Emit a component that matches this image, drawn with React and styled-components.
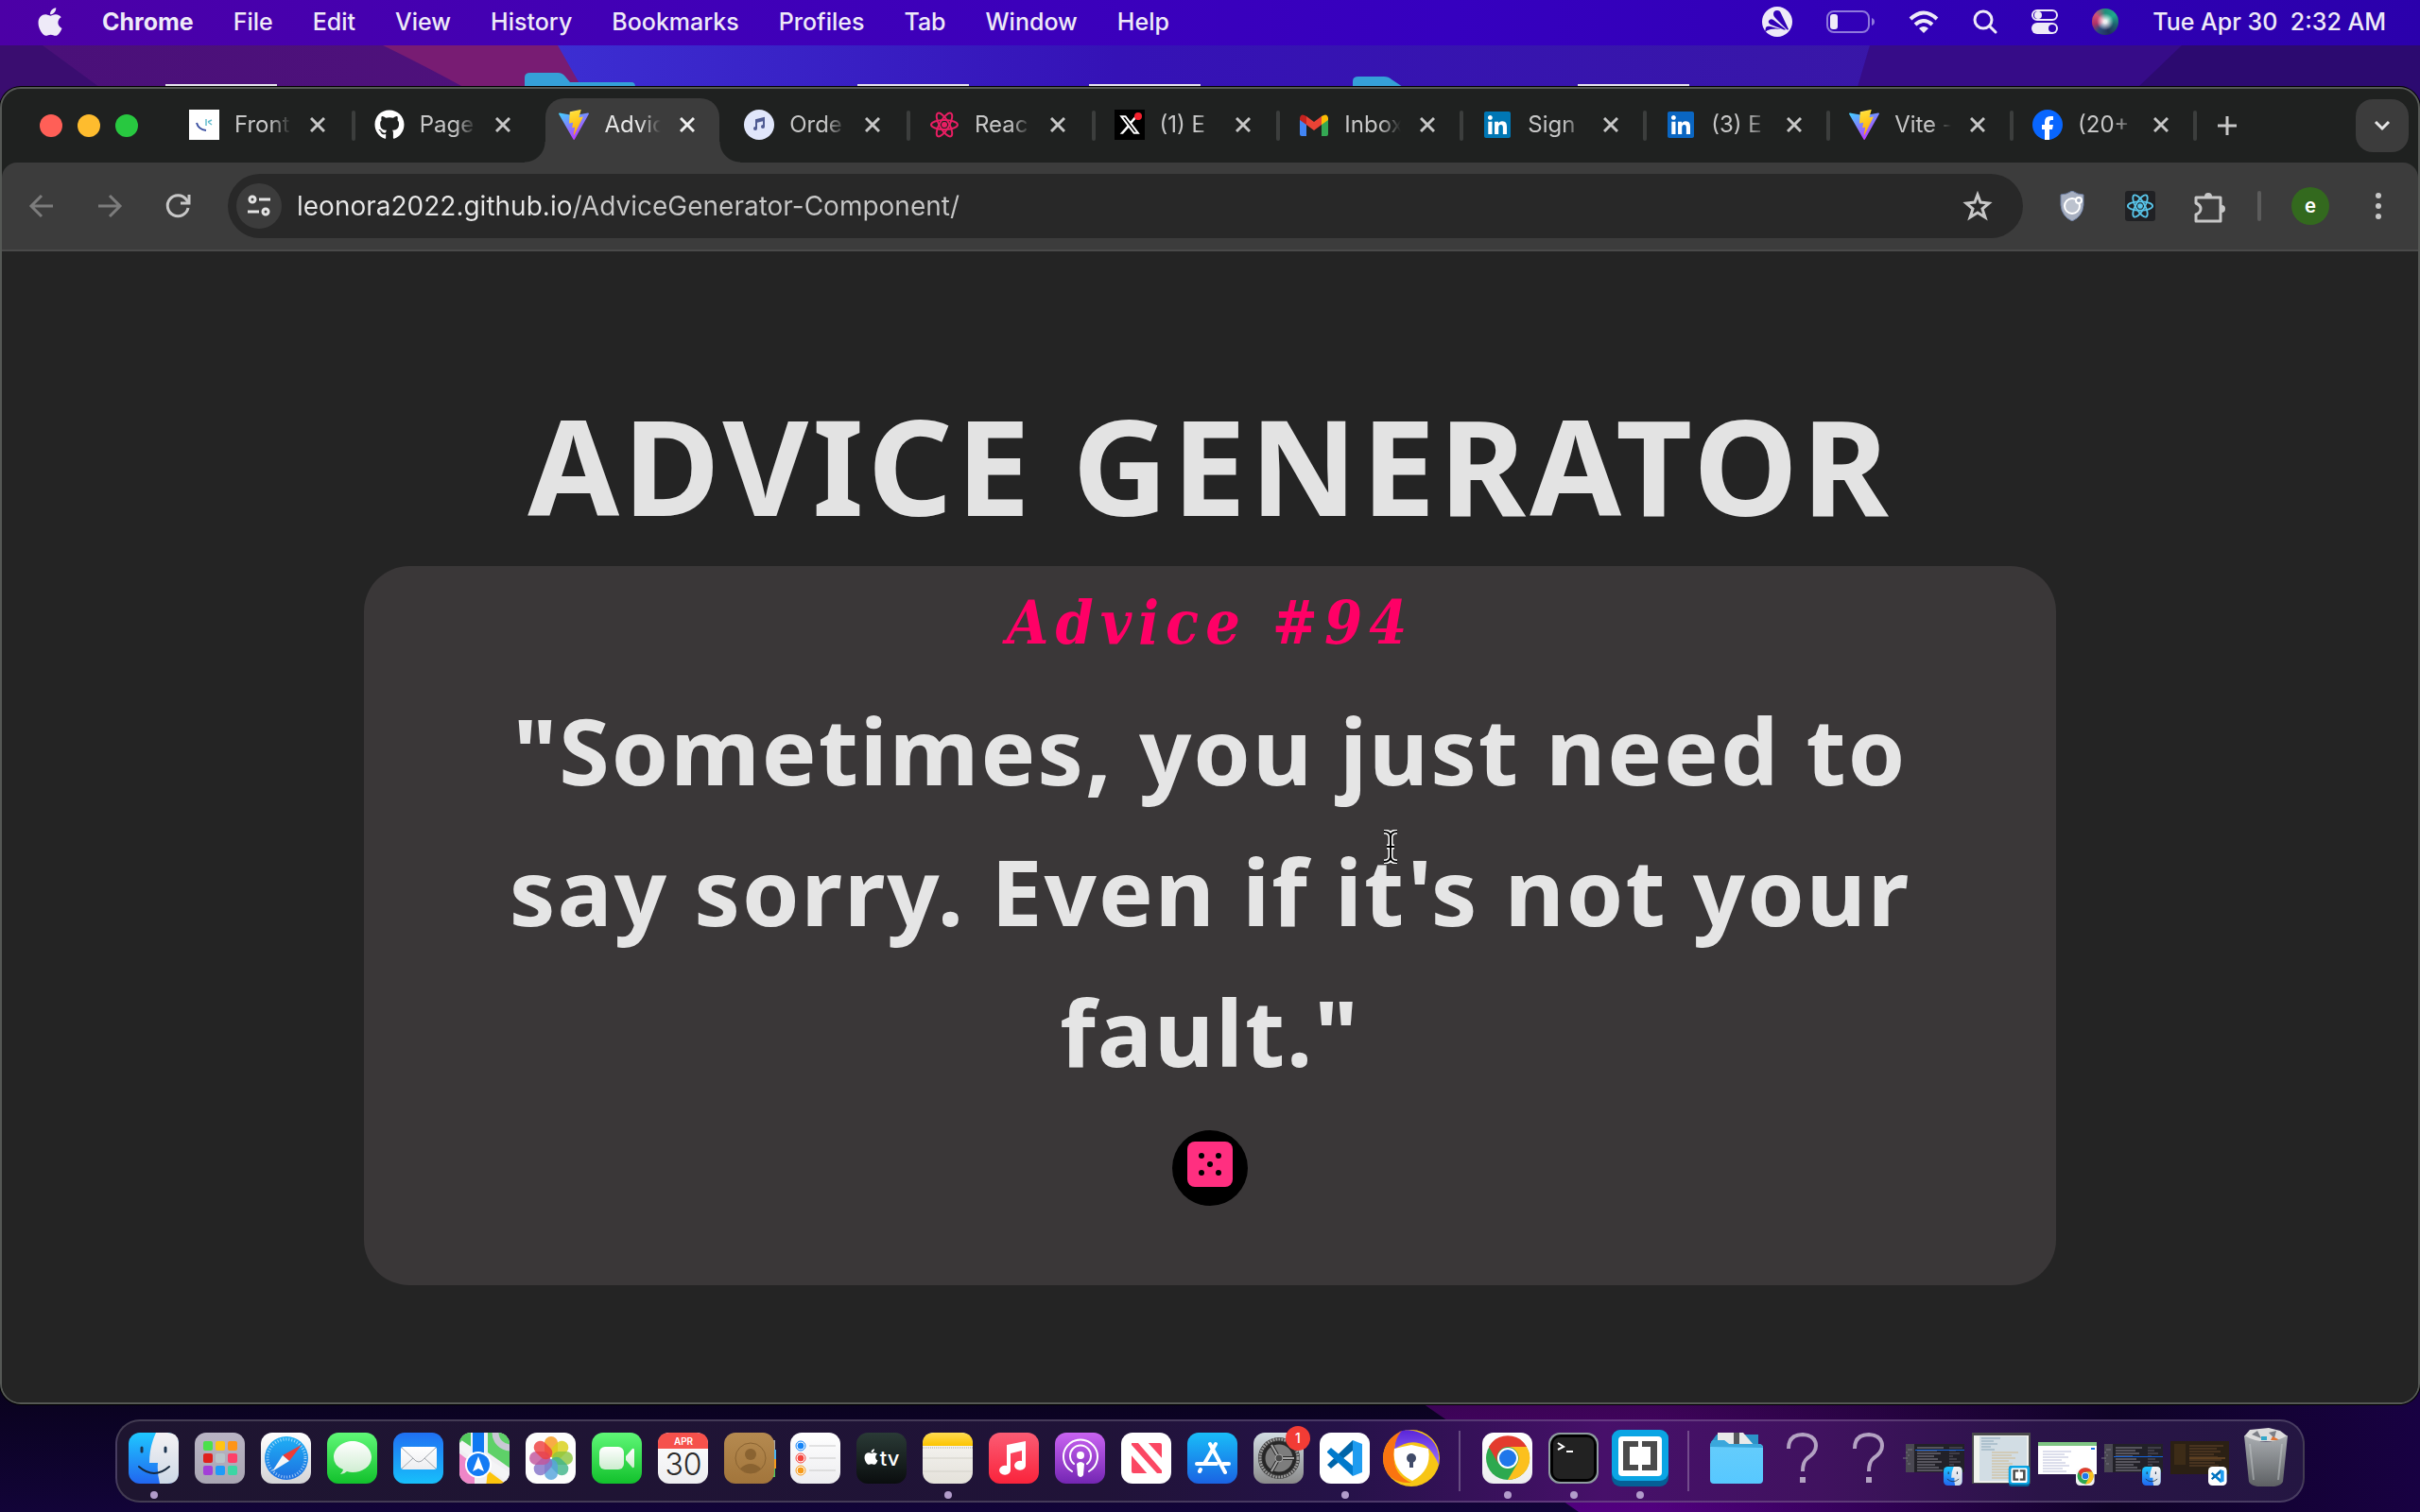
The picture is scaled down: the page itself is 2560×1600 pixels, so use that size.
import React from "react";
import styled, { createGlobalStyle, css } from "styled-components";
import { FaApple, FaGithub, FaLinkedin } from "react-icons/fa";
import { FaXTwitter } from "react-icons/fa6";

const GlobalStyle = createGlobalStyle`
  *, *::before, *::after { box-sizing: border-box; }
  body { margin: 0; background: #07031a; font-family: Inter, "Liberation Sans", sans-serif; }
  button, input { font: inherit; color: inherit; border: 0; padding: 0; background: none; }
  h1, h2, p { margin: 0; }
  svg { display: block; }
`;

/* ---------- shared paint ---------- */

const gradients = {
  finderBlue: ["#1fc8ff", "#2166f0"],
  finderFace: ["#f4f2f4", "#cdd9e6"],
  launchpad: ["#b9b4c4", "#a9a6b3"],
  steel: ["#ffffff", "#d4d4d6"],
  safari: ["#1fb0f5", "#1d6fe0"],
  green: ["#5ff777", "#12c12c"],
  mail: ["#2070f3", "#17c0fb"],
  contacts: ["#b58a50", "#a2753b"],
  tv: ["#2a3a36", "#0a0d0e"],
  paper: ["#f8f7f4", "#e4e1da"],
  notesTop: ["#ffdc52", "#fcc400"],
  music: ["#fb5c74", "#fa233b"],
  podcasts: ["#c963f1", "#7426b3"],
  appStore: ["#19bdf8", "#1a63e3"],
  settings: ["#d2dde3", "#8a8a8a"],
  white: ["#ffffff", "#ededf0"],
  bubble: ["#ffffff", "#cdeccf"],
  folder: ["#66cdfb", "#57c8ff"],
  trash: ["#a9adb1", "#5d6063"],
  avastPurple: ["#5a25d8", "#9a72ff"],
};

const PaintDefs = styled.svg`
  position: absolute;
  width: 0;
  height: 0;
`;

const Paints = () => (
  <PaintDefs aria-hidden="true">
    <defs>
      {Object.entries(gradients).map(([id, [from, to]]) => (
        <linearGradient key={id} id={id} x1="0" y1="0" x2="0" y2="1">
          <stop offset="0" stopColor={from} />
          <stop offset="1" stopColor={to} />
        </linearGradient>
      ))}
      <linearGradient id="viteBody" x1="0" y1="0" x2=".6" y2="1">
        <stop offset="0" stopColor="#41d1ff" />
        <stop offset="1" stopColor="#bd34fe" />
      </linearGradient>
      <linearGradient id="viteBolt" x1=".4" y1="0" x2=".6" y2="1">
        <stop offset="0" stopColor="#ffea83" />
        <stop offset=".1" stopColor="#ffdd35" />
        <stop offset="1" stopColor="#ffa800" />
      </linearGradient>
    </defs>
  </PaintDefs>
);

/* ---------- desktop ---------- */

const Desktop = styled.div`
  position: relative;
  isolation: isolate;
  display: flex;
  flex-direction: column;
  min-height: 100vh;
`;

const WallpaperLayer = styled.svg`
  position: absolute;
  inset: 0;
  width: 100%;
  height: 100%;
  z-index: -1;
`;

const Wallpaper = () => (
  <WallpaperLayer viewBox="0 0 2560 1600" preserveAspectRatio="none" aria-hidden="true">
    <defs>
      <linearGradient id="wpBlue"><stop offset="0" stopColor="#3c2ed2" /><stop offset=".3" stopColor="#3512b6" /><stop offset="1" stopColor="#3b1a9d" /></linearGradient>
      <linearGradient id="wpPurple"><stop offset="0" stopColor="#4a1079" /><stop offset="1" stopColor="#611786" /></linearGradient>
      <linearGradient id="wpDark" x1="0" y1="0" x2="0" y2="1"><stop offset="0" stopColor="#05020f" /><stop offset="1" stopColor="#120438" /></linearGradient>
      <linearGradient id="wpViolet" x1="0" y1="0" x2="0" y2="1"><stop offset="0" stopColor="#2d0639" /><stop offset="1" stopColor="#520080" /></linearGradient>
      <linearGradient id="wpFade"><stop offset="0" stopColor="#10022c" stopOpacity="0" /><stop offset=".6" stopColor="#0f0327" /><stop offset="1" stopColor="#180142" /></linearGradient>
    </defs>
    <path d="M0 48H2560V800H0Z" fill="#3a0d70" />
    <path d="M45 48L105 92L200 160H2560V48Z" fill="url(#wpPurple)" />
    <path d="M405 48Q450 70 490 92L600 160H2560V48Z" fill="#781c73" />
    <path d="M590 48L615 92L640 160H2560V48Z" fill="url(#wpBlue)" />
    <path d="M1978 48L1965 92L1950 160H2560V48Z" fill="#360c88" />
    <path d="M2308 48L2262 92L2200 160H2560V48Z" fill="#2c0a70" />
    <path d="M0 1400H2560V1600H0Z" fill="url(#wpDark)" />
    <path d="M1400 1412L1670 1600H2560V1412Z" fill="url(#wpViolet)" />
    <path d="M1750 1412H2560V1600H1750Z" fill="url(#wpFade)" />
    <path d="M555 92V82Q555 77 561 77H590Q595 77 598 81L603 87H668Q672 87 672 92Z" fill="#35a0d8" />
    <path d="M1431 92V86Q1431 81 1437 81H1464Q1469 81 1472 84L1484 92Z" fill="#35a0d8" />
    <path d="M175 89h118v2h-118zM907 89h118v2h-118zM1152 89h118v2h-118zM1669 89h118v2h-118z" fill="#e6e3ee" />
  </WallpaperLayer>
);

/* ---------- menu bar ---------- */

const MenuBar = styled.header`
  display: flex;
  justify-content: space-between;
  height: 48px;
  padding: 0 36px 2px 40px;
  background: linear-gradient(90deg, #4c00a6, #4000b8 30%, #3600bf 60%, #2b00ac);
  color: #eeeaf8;
  font-size: 25px;
  line-height: 32px;
`;

const MenuGroup = styled.nav`
  display: flex;
  align-items: center;
  gap: ${(p) => p.$gap}px;
  white-space: pre;
`;

const MenuItem = styled.button`
  font-weight: ${(p) => (p.$strong ? 700 : 500)};
`;

const AppleMenu = styled(FaApple)`
  width: 26px;
  height: 34px;
`;

const Siri = styled.span`
  width: 28px;
  height: 28px;
  border-radius: 50%;
  background:
    radial-gradient(circle, #ffffffe6 0 8%, transparent 45%),
    conic-gradient(#1f8f7c, #1fa88c 15%, #1c5f6f 30%, #20305a 45%, #2a4a7a 60%, #b03068 72%, #d05078 85%, #1f8f7c);
`;

const AvastGlyph = () => (
  <svg width="32" height="32" viewBox="0 0 32 32" fill="#3100b6">
    <circle cx="16" cy="16" r="16" fill="#eeeaf8" />
    <path d="M12 8Q12 4 16 4Q19 4 20 7L28 24Q27 25 26 24L14 12Q12 10 12 8Z" />
    <path d="M7 15Q9 12 12 14L25 24Q24 25 22 24L9 19Q6 17 7 15Z" />
    <path d="M4 22Q6 20 9 21L20 24Q14 23 9 24Q5 25 3 27Z" />
  </svg>
);
const BatteryGlyph = () => (
  <svg width="51" height="24" viewBox="0 0 51 24" fill="none">
    <rect x="1" y="1" width="44" height="22" rx="7" stroke="#8f78dc" strokeWidth="2" />
    <rect x="4" y="4" width="8" height="16" rx="3" fill="#eeeaf8" />
    <path d="M48 8Q51 9 51 12Q51 15 48 16Z" fill="#8f78dc" />
  </svg>
);
const WifiGlyph = () => (
  <svg width="32" height="24" viewBox="0 0 32 24" fill="none" stroke="#eeeaf8" strokeWidth="4">
    <path d="M2 9Q16-4 30 9" />
    <path d="M7 15Q16 7 25 15" />
    <path d="M16 24L11 19Q16 15 21 19Z" fill="#eeeaf8" stroke="none" />
  </svg>
);
const SearchGlyph = () => (
  <svg width="26" height="26" viewBox="0 0 26 26" fill="none" stroke="#eeeaf8" strokeWidth="3" strokeLinecap="round">
    <circle cx="11" cy="11" r="9" />
    <path d="M18 18L24 24" />
  </svg>
);
const ControlGlyph = () => (
  <svg width="28" height="26" viewBox="0 0 28 26">
    <rect x="1" y="1" width="26" height="10" rx="5" fill="none" stroke="#eeeaf8" strokeWidth="2" />
    <circle cx="7" cy="6" r="4" fill="#eeeaf8" />
    <rect x="0" y="14" width="28" height="12" rx="6" fill="#eeeaf8" />
    <circle cx="22" cy="20" r="4" fill="#3000b4" />
  </svg>
);

/* ---------- browser window ---------- */

const Window = styled.section`
  flex: 1;
  display: flex;
  flex-direction: column;
  margin-top: 44px;
  border: 2px solid #555855;
  border-radius: 22px;
  overflow: hidden;
  background: #1f2120;
  box-shadow: 0 0 0 1px #000;
`;

const TabStrip = styled.div`
  display: flex;
  align-items: center;
  height: 78px;
  padding: 0 10px 0 40px;
`;

const Lights = styled.div`
  display: flex;
  gap: 16px;
  width: 138px;
`;

const Light = styled.button`
  width: 24px;
  height: 24px;
  border-radius: 50%;
  background: ${(p) => p.$color};
`;

const TabList = styled.div`
  flex: 1;
  display: flex;
  align-self: stretch;
  min-width: 0;
`;

const Tab = styled.div`
  position: relative;
  isolation: isolate;
  flex: 194 1 0;
  min-width: 0;
  display: flex;
  align-items: center;
  padding: 0 0 2px 20px;
  color: ${(p) => (p.$active ? "#e6e6e6" : "#c7c7c7")};

  &:nth-child(-n + 6) {
    flex-grow: 196;
  }

  &::before {
    content: "";
    position: absolute;
    z-index: -1;
    ${(p) =>
      p.$active
        ? css`
            inset: 10px 6px 0;
            border-radius: 20px 20px 0 0;
            background: #3c3c3c;
          `
        : css`
            top: 23px;
            right: 0;
            width: 4px;
            height: 32px;
            border-radius: 2px;
            background: ${p.$divider ? "#3c3e3d" : "transparent"};
          `}
  }

  &::after {
    content: "";
    display: ${(p) => (p.$active ? "block" : "none")};
    position: absolute;
    z-index: -1;
    bottom: 0;
    left: -16px;
    right: -16px;
    height: 22px;
    background:
      radial-gradient(circle at 0 0, transparent 21px, #3c3c3c 22px) left / 22px 22px no-repeat,
      radial-gradient(circle at 100% 0, transparent 21px, #3c3c3c 22px) right / 22px 22px no-repeat;
  }
`;

const Favicon = styled.span`
  flex: none;
  display: grid;
  place-items: center;
  width: 32px;
  height: 32px;
  margin-right: 16px;
`;

const TabTitle = styled.span`
  flex: none;
  width: 70px;
  white-space: pre;
  font-size: 24px;
  line-height: 32px;
  mask-image: linear-gradient(90deg, #000 38px, transparent 60px);
`;

const CloseTab = styled.button`
  margin-left: 10px;
  color: ${(p) => (p.$active ? "#f0f0f0" : "#c7c7c7")};
`;

const NewTab = styled.button`
  display: grid;
  place-items: center;
  width: 64px;
  height: 56px;
  margin-right: 104px;
`;

const TabSearch = styled.button`
  display: grid;
  place-items: center;
  width: 56px;
  height: 56px;
  border-radius: 18px;
  background: #3c3c3c;
`;

const Toolbar = styled.div`
  display: flex;
  align-items: center;
  height: 94px;
  padding: 0 38px 0 26px;
  border-bottom: 2px solid #4a4a4a;
  border-radius: 16px 16px 0 0;
  background: #3c3c3c;
`;

const NavButtons = styled.div`
  display: flex;
  gap: 40px;
  width: 213px;
`;

const AddressBar = styled.form`
  flex: 1;
  display: flex;
  align-items: center;
  height: 68px;
  padding: 0 32px 0 9px;
  border-radius: 34px;
  background: #282828;
`;

const SiteInfo = styled.button`
  display: grid;
  place-items: center;
  width: 48px;
  height: 48px;
  margin-right: 16px;
  border-radius: 50%;
  background: #3c3c3c;
`;

const Address = styled.input`
  flex: 1;
  min-width: 0;
  height: 40px;
  outline: 0;
  font-size: 28px;
  background: linear-gradient(90deg, #e8e8e8 291px, #c7c7c7 291px);
  background-clip: text;
  color: transparent;
`;

const Extensions = styled.div`
  display: flex;
  align-items: center;
  margin-left: 36px;
`;

const Extension = styled.button`
  display: grid;
  place-items: center;
  width: 32px;
  height: 32px;
  margin-right: 40px;
  border-radius: 3px;
  background: ${(p) => p.$fill || "none"};
`;

const ToolbarRule = styled.span`
  width: 4px;
  height: 32px;
  margin: 0 32px 0 -4px;
  border-radius: 2px;
  background: #5c5c5c;
`;

const Avatar = styled.button`
  width: 40px;
  height: 40px;
  margin-right: 48px;
  border-radius: 50%;
  background: #33691e;
  color: #fff;
  font: 500 22px/36px Roboto, sans-serif;
`;

const Stroke = styled.svg.attrs({ fill: "none", stroke: "currentColor" })`
  width: ${(p) => p.$size}px;
  height: ${(p) => p.$size}px;
  color: ${(p) => p.$tone || "inherit"};
  stroke-width: ${(p) => p.$weight || 3};
`;

const ViteLogo = ({ size = 32 }) => (
  <svg width={size} height={size} viewBox="0 0 256 257">
    <path fill="url(#viteBody)" d="M255.153 37.938L134.897 252.976c-2.483 4.44-8.862 4.466-11.382.048L.875 37.958c-2.746-4.814 1.371-10.646 6.827-9.67l120.385 21.517a6.537 6.537 0 0 0 2.322-.004l117.867-21.483c5.438-.991 9.574 4.796 6.877 9.62Z" />
    <path fill="url(#viteBolt)" d="M185.432.063L96.44 17.501a3.268 3.268 0 0 0-2.634 3.014l-5.474 92.456a3.268 3.268 0 0 0 3.997 3.378l24.777-5.718c2.318-.535 4.413 1.507 3.936 3.838l-7.361 36.047c-.495 2.426 1.782 4.5 4.151 3.78l15.304-4.649c2.372-.72 4.652 1.36 4.15 3.788l-11.698 56.621c-.732 3.542 3.979 5.473 5.943 2.437l1.313-2.028l72.516-144.72c1.215-2.423-.88-5.186-3.54-4.672l-25.505 4.922c-2.396.462-4.435-1.77-3.759-4.114l16.646-57.705c.677-2.35-1.37-4.583-3.769-4.113Z" />
  </svg>
);

const FrontLogo = () => (
  <svg width="32" height="32" viewBox="0 0 32 32">
    <path fill="#fff" d="M0 0h32v32H0z" />
    <path d="M8 14Q10 21 18 22" stroke="#3f54a3" strokeWidth="2" fill="none" />
    <path d="M18 10V17M20 13L24 11M20 13L24 16" stroke="#67bece" strokeWidth="1.500" fill="none" />
  </svg>
);

const MusicLogo = () => (
  <svg width="32" height="32" viewBox="0 0 32 32">
    <circle cx="16" cy="16" r="16" fill="#e0e6fb" />
    <path d="M13 20V11L21 9V18" stroke="#4f5b93" strokeWidth="2" fill="none" />
    <path d="M13 11L21 9V12L13 14Z" fill="#4f5b93" />
    <circle cx="12" cy="20" r="2" fill="#4f5b93" />
    <circle cx="20" cy="18" r="2" fill="#4f5b93" />
  </svg>
);

const ReactOutline = ({ color, size }) => (
  <svg width={size} height={size} viewBox="0 0 32 32" fill="none" stroke={color} strokeWidth="2">
    <ellipse cx="16" cy="16" rx="14" ry="5" />
    <ellipse cx="16" cy="16" rx="14" ry="5" transform="rotate(60 16 16)" />
    <ellipse cx="16" cy="16" rx="14" ry="5" transform="rotate(120 16 16)" />
    <circle cx="16" cy="16" r="3" fill={color} stroke="none" />
  </svg>
);

const XLogo = () => (
  <svg width="32" height="32" viewBox="0 0 32 32">
    <path fill="#000" d="M0 0h32v32H0z" />
    <g transform="translate(4 4)"><FaXTwitter size={24} color="#fff" /></g>
    <circle cx="25" cy="7" r="4" fill="#f4212e" />
  </svg>
);

const GmailLogo = () => (
  <svg width="30" height="23" viewBox="0 0 30 23">
    <path d="M0 5V21Q0 23 2 23H7V10Z" fill="#4285f4" />
    <path d="M23 10V23H28Q30 23 30 21V5Z" fill="#34a853" />
    <path d="M7 2L15 8L23 2V11L15 17L7 11Z" fill="#ea4335" />
    <path d="M0 4Q1-2 7 2V11L0 6Z" fill="#c5221f" />
    <path d="M30 4Q29-2 23 2V11L30 6Z" fill="#fbbc04" />
  </svg>
);

const FacebookLogo = () => (
  <svg width="32" height="32" viewBox="0 0 32 32">
    <circle cx="16" cy="16" r="16" fill="#0866ff" />
    <path d="M13 32V21H10V16H13V13Q13 7 19 7Q21 7 22 7V11H20Q18 11 18 14V16H22L21 21H18V32Z" fill="#fff" />
  </svg>
);

const LinkedinLogo = ({ color }) => (
  <svg width="32" height="32" viewBox="0 0 32 32">
    <rect x="5" y="5" width="22" height="22" fill="#fff" />
    <FaLinkedin size={32} color={color} />
  </svg>
);

const tabs = [
  { title: "Front", icon: <FrontLogo />, divider: true },
  { title: "Page", icon: <FaGithub size={32} color="#fff" /> },
  { title: "Advic", icon: <ViteLogo />, active: true },
  { title: "Orde", icon: <MusicLogo />, divider: true },
  { title: "Reac", icon: <ReactOutline size={32} color="#e91e63" />, divider: true },
  { title: "(1) E", icon: <XLogo />, divider: true },
  { title: "Inbox", icon: <GmailLogo />, divider: true },
  { title: "Sign", icon: <LinkedinLogo color="#0077b5" />, divider: true },
  { title: "(3) E", icon: <LinkedinLogo color="#0a66c2" />, divider: true },
  { title: "Vite -", icon: <ViteLogo />, divider: true },
  { title: "(20+", icon: <FacebookLogo />, divider: true },
];

/* ---------- page ---------- */

const Page = styled.main`
  position: relative;
  flex: 1;
  display: flex;
  flex-direction: column;
  align-items: center;
  padding: 152px 0 120px;
  background: #242424;
`;

const Title = styled.h1`
  margin-bottom: 34px;
  color: #e3e3e3;
  font: 700 140px/147px "Noto Sans", sans-serif;
  letter-spacing: 4px;
`;

const Card = styled.article`
  display: flex;
  flex-direction: column;
  align-items: center;
  width: 70%;
  padding: 20px 128px 84px;
  border-radius: 48px;
  background: #3a3738;
`;

const CardTitle = styled.h2`
  color: #ff0066;
  font: italic 700 64px/80px "DejaVu Serif Condensed", "DejaVu Serif", serif;
  letter-spacing: 7px;
`;

const Quote = styled.p`
  margin-top: 20px;
  color: #e5e5e5;
  text-align: center;
  font: 700 97px/149px "Noto Sans", sans-serif;
  letter-spacing: 2px;
`;

const DiceButton = styled.button`
  display: grid;
  place-items: start center;
  width: 80px;
  height: 80px;
  margin-top: 30px;
  padding-top: 12px;
  border-radius: 50%;
  background: #000;
`;

const TextCursor = styled.svg`
  position: absolute;
  left: 1459px;
  top: 612px;
`;

/* ---------- dock ---------- */

const DockArea = styled.footer`
  display: flex;
  justify-content: center;
  padding: 16px 0 10px;
`;

const DockBar = styled.nav`
  display: flex;
  height: 88px;
  padding: 0 4px;
  border: 2px solid #ffffff2b;
  border-radius: 26px;
  background: linear-gradient(90deg, #1e1530, #201338 45%, #251248 56%, #47106a 68%, #40125f 78%, #2a1448 88%, #241642);
`;

const DockItem = styled.button`
  display: flex;
  flex-direction: column;
  align-items: center;
  gap: 8px;
  width: 70px;
  padding-top: 12px;

  &::after {
    content: "";
    width: 8px;
    height: 8px;
    border-radius: 50%;
    background: ${(p) => (p.$running ? "#b29ccb" : "transparent")};
  }
`;

const DockRule = styled.span`
  width: 2px;
  height: 64px;
  margin: 10px 15px;
  background: #ffffff40;
`;

const AppIcon = styled.svg.attrs({ viewBox: "0 0 54 54", "aria-hidden": true })`
  width: 54px;
  height: 54px;
  overflow: visible;
`;

const Tile = ({ fill }) => <rect x="0" width="53" height="54" rx="12" fill={fill} />;

const FinderArt = () => (
  <>
    <Tile fill="url(#finderBlue)" />
    <path d="M29 0H41Q53 0 53 12V42Q53 54 41 54H33Q30 42 31 32H22Q22 15 29 0Z" fill="url(#finderFace)" />
    <path d="M14 16V20M39 16V20" stroke="#1c3550" strokeWidth="3" strokeLinecap="round" />
    <path d="M11 36Q27 50 43 36" stroke="#16283c" strokeWidth="2" fill="none" strokeLinecap="round" />
  </>
);

const launchColors = ["#4be04a", "#ffc414", "#ff9417", "#e0201c", "#b8c4c9", "#ff4068", "#a33fd8", "#1e9bf8", "#3cd6a4"];
const LaunchpadArt = () => (
  <>
    <Tile fill="url(#launchpad)" />
    {launchColors.map((c, i) => (
      <rect key={c} x={9 + (i % 3) * 13} y={9 + Math.floor(i / 3) * 13} width="10" height="10" rx="2" fill={c} />
    ))}
  </>
);

const SafariArt = () => (
  <>
    <Tile fill="url(#steel)" />
    <circle cx="27" cy="27" r="23" fill="url(#safari)" />
    <circle cx="27" cy="27" r="20" fill="none" stroke="#fff" strokeOpacity=".6" strokeWidth="3" strokeDasharray="1 2" />
    <path d="M43 13L23 24L30 30Z" fill="#ef3b36" />
    <path d="M12 41L23 24L30 30Z" fill="#f4f6f8" />
  </>
);

const MessagesArt = () => (
  <>
    <Tile fill="url(#green)" />
    <path d="M27 9C37 9 47 16 47 26S37 42 27 42Q24 42 21 41Q18 44 14 44Q17 41 17 39Q7 35 7 26C7 16 17 9 27 9Z" fill="url(#bubble)" />
  </>
);

const MailArt = () => (
  <>
    <Tile fill="url(#mail)" />
    <rect x="8" y="15" width="38" height="24" rx="3" fill="url(#white)" />
    <path d="M9 16L24 30Q27 32 30 30L45 16M9 38L21 27M45 38L33 27" stroke="#a3a7ad" strokeWidth="1" fill="none" />
  </>
);

const MapsArt = () => (
  <>
    <clipPath id="mapsTile"><rect x="0" width="53" height="54" rx="12" /></clipPath>
    <g clipPath="url(#mapsTile)">
      <path d="M0 0H54V54H0Z" fill="#f0eff2" />
      <path d="M0 0H12V18L0 10Z" fill="#53c95e" />
      <path d="M30 0H54V38L30 21Z" fill="#5ed168" />
      <path d="M0 22L16 34V54H0Z" fill="#ee86c8" />
      <path d="M30 40L54 58H28Z" fill="#fcc40d" />
      <path d="M0 12L56 50" stroke="#f4f4f6" strokeWidth="9" />
      <circle cx="54" cy="0" r="16" fill="none" stroke="#c9c8d4" strokeWidth="7" />
      <path d="M12 0H29V34H12Z" fill="#e9f2fb" />
      <path d="M14 0H26V34H14Z" fill="#0f79f2" />
      <circle cx="20" cy="34" r="14" fill="#fff" />
      <circle cx="20" cy="34" r="12" fill="#147bf4" />
      <path d="M20 25L26 41L20 38L14 41Z" fill="#fff" />
    </g>
  </>
);

const petals = ["#f79a1c", "#d8cf17", "#8cc63f", "#41b58a", "#56a3dc", "#8473c8", "#c1559c", "#ee4040"];
const PhotosArt = () => (
  <>
    <Tile fill="#fdfdfd" />
    {petals.map((c, i) => (
      <rect key={c} x="20" y="4" width="14" height="22" rx="7" fill={c} fillOpacity=".82" transform={`rotate(${i * 45} 27 27)`} />
    ))}
  </>
);

const FacetimeArt = () => (
  <>
    <Tile fill="url(#green)" />
    <rect x="8" y="15" width="26" height="24" rx="6" fill="url(#bubble)" />
    <path d="M36 25L43 17Q45 16 45 19V35Q45 38 43 37L36 29Z" fill="url(#bubble)" />
  </>
);

const IconText = styled.text.attrs({ textAnchor: "middle" })`
  font-family: Inter, "Liberation Sans", sans-serif;
  font-size: ${(p) => p.$size}px;
  font-weight: ${(p) => p.$weight};
  fill: ${(p) => p.$color};
`;

const CalendarArt = () => (
  <>
    <Tile fill="url(#white)" />
    <path d="M0 17V12Q0 0 12 0H41Q53 0 53 12V17Z" fill="#f5514c" />
    <IconText x="27" y="13" $size={10} $weight={600} $color="#fff">APR</IconText>
    <IconText x="27" y="45" $size={32} $weight={300} $color="#2a2a2a">30</IconText>
  </>
);

const ContactsArt = () => (
  <>
    <path d="M48 8H54V18H48Z" fill="#a9a9a9" /><path d="M48 18H55V28H48Z" fill="#4cb4f0" />
    <path d="M48 28H55V38H48Z" fill="#f59a1c" /><path d="M48 38H54V47H48Z" fill="#4ec95d" />
    <Tile fill="url(#contacts)" />
    <circle cx="28" cy="27" r="16" fill="none" stroke="#8a6331" strokeWidth="1" />
    <circle cx="28" cy="23" r="6" fill="#8a6331" />
    <path d="M17 38Q28 28 39 38Q28 48 17 38Z" fill="#8a6331" />
  </>
);

const RemindersArt = () => (
  <>
    <Tile fill="url(#white)" />
    {["#1584f7", "#f5453d", "#f79a17"].map((c, i) => (
      <g key={c}>
        <circle cx="11" cy={14 + i * 13} r="4" fill={c} stroke="#fff" />
        <circle cx="11" cy={14 + i * 13} r="5" fill="none" stroke={c} />
        <path d={`M20 ${14 + i * 13}H48`} stroke="#c9c9c9" strokeWidth="1" />
      </g>
    ))}
  </>
);

const TvArt = () => (
  <>
    <Tile fill="url(#tv)" />
    <g transform="translate(6 16)"><FaApple size={19} color="#fff" /></g>
    <IconText x="35" y="35" $size={22} $weight={500} $color="#fff">tv</IconText>
  </>
);

const NotesArt = () => (
  <>
    <Tile fill="url(#paper)" />
    <path d="M0 14V12Q0 0 12 0H41Q53 0 53 12V14Z" fill="url(#notesTop)" />
    <path d="M0 16H53" stroke="#a9a7a2" strokeDasharray="1 1" />
    <path d="M0 27H53M0 41H53" stroke="#d3d1ca" />
  </>
);

const MusicArt = () => (
  <>
    <Tile fill="url(#music)" />
    <path d="M19 13L39 9V34A6 5 0 1 1 35 30V19L23 22V39A6 5 0 1 1 19 35Z" fill="#fff" />
  </>
);

const PodcastsArt = () => (
  <>
    <Tile fill="url(#podcasts)" />
    <path d="M18 41A18 18 0 1 1 36 41M20 33A11 11 0 1 1 34 33" stroke="#fff" strokeWidth="2" fill="none" strokeLinecap="round" />
    <circle cx="27" cy="24" r="4" fill="#fff" />
    <path d="M23 33Q27 29 31 33L30 45Q27 49 24 45Z" fill="#fff" />
  </>
);

const NewsArt = () => (
  <>
    <Tile fill="#fff" />
    <path d="M11 13Q11 11 13 11H41Q43 11 43 13V41Q43 43 41 43H13Q11 43 11 41Z" fill="#fb4763" />
    <path d="M9 9H27L45 29V45H29L9 22Z" fill="#fff" />
    <path d="M11 11H18L43 40V43H38L11 13Z" fill="#fb4763" />
  </>
);

const AppStoreArt = () => (
  <>
    <Tile fill="url(#appStore)" />
    <path d="M24 12L40 42M30 12L18 33M14 39L13 41M10 33H31M38 33H44" stroke="#fff" strokeWidth="4" strokeLinecap="round" />
  </>
);

const SettingsArt = () => (
  <>
    <Tile fill="url(#settings)" />
    <circle cx="27" cy="27" r="22" fill="#333" />
    <circle cx="27" cy="27" r="20" fill="none" stroke="#9a9a9a" strokeWidth="3" strokeDasharray="2 1" />
    <circle cx="27" cy="27" r="16" fill="#7d7d7d" stroke="#262626" strokeWidth="3" />
    <path d="M27 27H43M27 27L19 13M27 27L19 41" stroke="#2a2a2a" strokeWidth="4" />
    <path d="M27 27H43M27 27L19 13M27 27L19 41" stroke="#a5a5a5" strokeWidth="2" />
    <circle cx="27" cy="27" r="4" fill="#4a4a4a" stroke="#a5a5a5" />
    <circle cx="47" cy="6" r="13" fill="#f23c35" />
    <IconText x="47" y="11" $size={14} $weight={500} $color="#fff">1</IconText>
  </>
);

const VscodeArt = () => (
  <>
    <Tile fill="#fff" />
    <path d="M8 34L35 8V19L12 38Z" fill="#0065a9" />
    <path d="M8 20L12 16L35 35V46L8 21Z" fill="#007acc" />
    <path d="M35 8L45 12V42L35 46Z" fill="#1f9cf0" />
  </>
);

const AvastArt = () => (
  <>
    <circle cx="27" cy="27" r="30" fill="#f7c515" />
    <path d="M14-1Q27-6 44 4Q58 14 56 34Q50 20 42 14Q26 5 9 18Q10 5 14-1Z" fill="url(#avastPurple)" />
    <path d="M17-2Q-3 8-3 28Q-1 54 27 53Q5 44 9 16Q11 4 17-2Z" fill="#fa7410" />
    <path d="M9 17Q17 15 27 13Q36 15 45 17Q49 40 28 51Q6 40 9 17Z" fill="#fff" />
    <circle cx="27" cy="27" r="5" fill="#404b69" />
    <path d="M25 29H29V37H25Z" fill="#404b69" />
  </>
);

const ChromeArt = () => (
  <>
    <Tile fill="url(#white)" />
    <circle cx="27" cy="27" r="23" fill="#2da94f" />
    <path d="M7 15A23 23 0 0 1 47 15H27A12 12 0 0 0 17 33Z" fill="#e33b2e" />
    <path d="M47 15A23 23 0 0 1 27 50L37 33A12 12 0 0 0 27 15Z" fill="#fcc01e" />
    <circle cx="27" cy="27" r="11" fill="#fff" />
    <circle cx="27" cy="27" r="9" fill="#1f77ea" />
  </>
);

const TerminalArt = () => (
  <>
    <Tile fill="#8f9c9f" />
    <rect x="2" y="2" width="49" height="50" rx="11" fill="#000" />
    <rect x="5" y="5" width="43" height="44" rx="7" fill="#222" />
    <path d="M10 11L16 15L10 18M19 20H26" stroke="#fff" strokeWidth="2" fill="none" />
  </>
);

const BracketsArt = () => (
  <>
    <rect x="-3" y="-3" width="60" height="60" rx="9" fill="#055f96" />
    <rect x="-3" y="-3" width="60" height="54" rx="9" fill="#0ba5e4" />
    <rect x="4" y="4" width="46" height="42" rx="4" fill="#fff" />
    <path d="M9 9H25V15H16V34H25V40H9ZM29 9H45V40H29V34H38V15H29Z" fill="#4b4b4b" />
  </>
);

const FolderArt = () => (
  <>
    <path d="M0 10L6 2H50V16H0Z" fill="#2c93c8" />
    <path d="M7 0H34L46 14H7Z" fill="#e9e9e9" />
    <path d="M24 0H30V13H24Z" fill="#55585c" />
    <path d="M-1 16Q-1 8 4 8H14L19 12H50Q55 12 55 16V50Q55 54 51 54H3Q-1 54-1 50Z" fill="url(#folder)" />
    <path d="M-1 15Q-1 8 4 8H14L19 12H50Q55 12 55 16Z" fill="#3aa7dc" />
  </>
);

const QuestionArt = () => (
  <>
    <path d="M12 17Q12 2 27 2Q41 3 41 14Q41 21 32 27Q27 31 27 41" stroke="#b3a2c2" strokeWidth="4" fill="none" />
    <rect x="24" y="47" width="6" height="6" fill="#b3a2c2" />
  </>
);

const TrashArt = () => (
  <>
    <path d="M4 4L10-3L20-4L30-5L42-2L50 4L47 9H8Z" fill="#dcdcdc" />
    <path d="M12 2L18-2L22 6ZM30 0L38-2L36 6Z" fill="#7c7f86" />
    <path d="M22 4H28V8H22Z" fill="#33a7c9" /><path d="M34 4L42 8H32Z" fill="#e07434" />
    <path d="M4 3Q27 16 50 3L45 52Q43 56 36 57H18Q11 56 9 52Z" fill="url(#trash)" />
    <path d="M10 12L14 50M44 12L40 50" stroke="#c4c7ca" strokeOpacity=".5" strokeWidth="2" />
  </>
);

const Rows = ({ x, y, width, count, step, color }) =>
  Array.from({ length: count }, (_, i) => (
    <path key={i} d={`M${x} ${y + i * step}h${width - ((i * 7) % 11)}`} stroke={color} strokeWidth="1" />
  ));

const Mini = ({ children }) => <g transform="translate(36 36) scale(.37)">{children}</g>;

const FinderWindowArt = ({ selected = 6 }) => (
  <>
    <path d="M-4 12H58V42H-4Z" fill="#222128" />
    <path d="M-4 12H5V42H-4Z" fill="#4a4852" />
    <Rows x={-2} y={18} width={5} count={6} step={3} color="#77757f" />
    <Rows x={8} y={16} width={28} count={9} step={3} color="#8b8993" />
    <Rows x={42} y={16} width={14} count={9} step={3} color="#5f5d68" />
    <path d={`M6 ${12 + selected}H58v1H6Z`} fill="#1463dc" />
    <Mini><FinderArt /></Mini>
  </>
);

const LowerFinderWindowArt = () => <FinderWindowArt selected={13} />;

const EditorWindowArt = () => (
  <>
    <path d="M-4 0H58V54H-4Z" fill="#4a4a4c" />
    <path d="M-2 3H56V53H-2Z" fill="#f1f2ee" />
    <path d="M4 4H54V51H4Z" fill="#d2dde4" />
    <Rows x={6} y={6} width={20} count={5} step={3} color="#8ba6b8" />
    <Rows x={17} y={21} width={28} count={10} step={3} color="#d0b98e" />
    <Mini><BracketsArt /></Mini>
  </>
);

const BrowserWindowArt = () => (
  <>
    <path d="M-4 10H58V44H-4Z" fill="#fff" />
    <path d="M-4 10H58V14H-4Z" fill="#7fc583" />
    <path d="M52 16H56V18H52Z" fill="#1a73e8" />
    <Rows x={1} y={20} width={30} count={8} step={3} color="#b9bdd8" />
    <Mini><ChromeArt /></Mini>
  </>
);

const CodeWindowArt = () => (
  <>
    <path d="M-4 9H58V44H-4Z" fill="#2b2014" />
    <path d="M0 12H12V34H0Z" fill="#3d2c17" />
    <Rows x={16} y={14} width={36} count={8} step={3} color="#66472b" />
    <path d="M16 26H54V28H16Z" fill="#5e4020" />
    <Mini><VscodeArt /></Mini>
  </>
);

const dockGroups = [
  [
    ["Finder", FinderArt, true], ["Launchpad", LaunchpadArt], ["Safari", SafariArt], ["Messages", MessagesArt],
    ["Mail", MailArt], ["Maps", MapsArt], ["Photos", PhotosArt], ["FaceTime", FacetimeArt],
    ["Calendar", CalendarArt], ["Contacts", ContactsArt], ["Reminders", RemindersArt], ["TV", TvArt],
    ["Notes", NotesArt, true], ["Music", MusicArt], ["Podcasts", PodcastsArt], ["News", NewsArt],
    ["App Store", AppStoreArt], ["System Settings", SettingsArt], ["Visual Studio Code", VscodeArt, true],
    ["Secure Browser", AvastArt],
  ],
  [["Chrome", ChromeArt, true], ["Terminal", TerminalArt, true], ["Brackets", BracketsArt, true]],
  [
    ["Downloads", FolderArt], ["Missing item", QuestionArt], ["Missing item", QuestionArt],
    ["Finder window", FinderWindowArt], ["Brackets window", EditorWindowArt], ["Chrome window", BrowserWindowArt],
    ["Finder window", LowerFinderWindowArt], ["Code window", CodeWindowArt], ["Trash", TrashArt],
  ],
];

const menus = ["Chrome", "File", "Edit", "View", "History", "Bookmarks", "Profiles", "Tab", "Window", "Help"];

export default function App() {
  return (
    <Desktop>
      <GlobalStyle />
      <Paints />
      <Wallpaper />

      <MenuBar>
        <MenuGroup $gap={42} aria-label="Application menu">
          <AppleMenu />
          {menus.map((name, i) => (
            <MenuItem key={name} $strong={i === 0}>{name}</MenuItem>
          ))}
        </MenuGroup>
        <MenuGroup $gap={36} aria-label="Status menu">
          <AvastGlyph />
          <BatteryGlyph />
          <WifiGlyph />
          <SearchGlyph />
          <ControlGlyph />
          <Siri />
          <MenuItem>{"Tue Apr 30  2:32 AM"}</MenuItem>
        </MenuGroup>
      </MenuBar>

      <Window>
        <TabStrip>
          <Lights>
            <Light $color="#ff5f57" aria-label="Close" />
            <Light $color="#febc2e" aria-label="Minimize" />
            <Light $color="#28c840" aria-label="Zoom" />
          </Lights>
          <TabList>
            {tabs.map((tab) => (
              <Tab key={tab.title} $active={tab.active} $divider={tab.divider}>
                <Favicon>{tab.icon}</Favicon>
                <TabTitle>{tab.title}</TabTitle>
                <CloseTab $active={tab.active} aria-label={`Close ${tab.title}`}>
                  <Stroke $size={16} viewBox="0 0 16 16"><path d="M1 1L15 15M15 1L1 15" /></Stroke>
                </CloseTab>
              </Tab>
            ))}
          </TabList>
          <NewTab aria-label="New tab">
            <Stroke $size={20} $tone="#c7c7c7" viewBox="0 0 20 20"><path d="M10 0V20M0 10H20" /></Stroke>
          </NewTab>
          <TabSearch aria-label="Search tabs">
            <Stroke $size={18} $tone="#e6e6e6" viewBox="0 0 18 18"><path d="M2 5L9 12L16 5" /></Stroke>
          </TabSearch>
        </TabStrip>

        <Toolbar>
          <NavButtons>
            <button aria-label="Back">
              <Stroke $size={32} $tone="#7c7c7c" viewBox="0 0 32 32"><path d="M28 16H6M16 5L5 16L16 27" /></Stroke>
            </button>
            <button aria-label="Forward">
              <Stroke $size={32} $tone="#7c7c7c" viewBox="0 0 32 32"><path d="M4 16H26M16 5L27 16L16 27" /></Stroke>
            </button>
            <button aria-label="Reload">
              <Stroke $size={32} $tone="#c7c7c7" viewBox="0 0 32 32">
                <path d="M27 18A11 11 0 1 1 25 9L28 13" /><path d="M28 4V13H19" />
              </Stroke>
            </button>
          </NavButtons>
          <AddressBar>
            <SiteInfo type="button" aria-label="Site information">
              <Stroke $size={26} $tone="#e3e3e3" viewBox="0 0 26 26">
                <circle cx="6" cy="6" r="3" /><path d="M13 6H25" />
                <circle cx="20" cy="19" r="3" /><path d="M1 19H13" />
              </Stroke>
            </SiteInfo>
            <Address aria-label="Address" defaultValue="leonora2022.github.io/AdviceGenerator-Component/" spellCheck={false} />
            <button type="button" aria-label="Bookmark this page">
              <Stroke $size={32} $tone="#c7c7c7" viewBox="0 0 32 32">
                <path d="M16 4L19 12L28 13L21 19L24 28L16 23L8 28L11 19L4 13L13 12Z" />
              </Stroke>
            </button>
          </AddressBar>
          <Extensions>
            <Extension aria-label="Security extension">
              <svg width="26" height="32" viewBox="0 0 26 32">
                <path d="M13 0Q19 4 25 4V15Q24 27 13 32Q2 27 1 15V4Q7 4 13 0Z" fill="#a7afc0" stroke="#6f80a4" />
                <circle cx="13" cy="16" r="8" fill="#bcc2ce" stroke="#fff" strokeWidth="2" />
                <circle cx="20" cy="10" r="3" fill="#a7afc0" stroke="#fff" strokeWidth="2" />
              </svg>
            </Extension>
            <Extension aria-label="React developer tools" $fill="#202124"><ReactOutline size={30} color="#58c4e8" /></Extension>
            <Extension aria-label="Extensions">
              <Stroke $size={34} $tone="#c7c7c7" viewBox="0 0 34 34" strokeLinejoin="round">
                <path d="M3 7H29V32H3V25Q8 23 8 19Q8 15 3 13Z" />
                <path d="M12 6A4 4 0 0 1 20 6ZM30 15A4 4 0 0 1 30 23Z" fill="#c7c7c7" stroke="none" />
              </Stroke>
            </Extension>
            <ToolbarRule />
            <Avatar aria-label="Profile">e</Avatar>
            <button aria-label="Browser menu">
              <svg width="8" height="30" viewBox="0 0 8 30" fill="#c7c7c7">
                <circle cx="4" cy="4" r="3" /><circle cx="4" cy="15" r="3" /><circle cx="4" cy="26" r="3" />
              </svg>
            </button>
          </Extensions>
        </Toolbar>

        <Page>
          <Title>ADVICE GENERATOR</Title>
          <Card>
            <CardTitle>Advice #94</CardTitle>
            <Quote>"Sometimes, you just need to say sorry. Even if it's not your fault."</Quote>
            <DiceButton aria-label="New advice">
              <svg width="48" height="48" viewBox="0 0 48 48">
                <rect width="48" height="48" rx="8" fill="#ff2f80" />
                {[[15, 15], [33, 15], [24, 24], [15, 33], [33, 33]].map(([x, y]) => (
                  <circle key={`${x}-${y}`} cx={x} cy={y} r="3" />
                ))}
              </svg>
            </DiceButton>
          </Card>
          <TextCursor width="20" height="36" viewBox="0 0 20 36" fill="none" aria-hidden="true">
            <path d="M3 2Q10 2 10 8Q10 2 17 2M10 6V30M6 18H14M3 34Q10 34 10 28Q10 34 17 34" stroke="#fff" strokeWidth="5" />
            <path d="M3 2Q10 2 10 8Q10 2 17 2M10 6V30M6 18H14M3 34Q10 34 10 28Q10 34 17 34" stroke="#000" strokeWidth="2" />
          </TextCursor>
        </Page>
      </Window>

      <DockArea>
        <DockBar aria-label="Dock">
          {dockGroups.map((group, g) => (
            <React.Fragment key={g}>
              {g > 0 && <DockRule />}
              {group.map(([name, Art, running], i) => (
                <DockItem key={`${name}-${i}`} aria-label={name} $running={running}>
                  <AppIcon><Art /></AppIcon>
                </DockItem>
              ))}
            </React.Fragment>
          ))}
        </DockBar>
      </DockArea>
    </Desktop>
  );
}
